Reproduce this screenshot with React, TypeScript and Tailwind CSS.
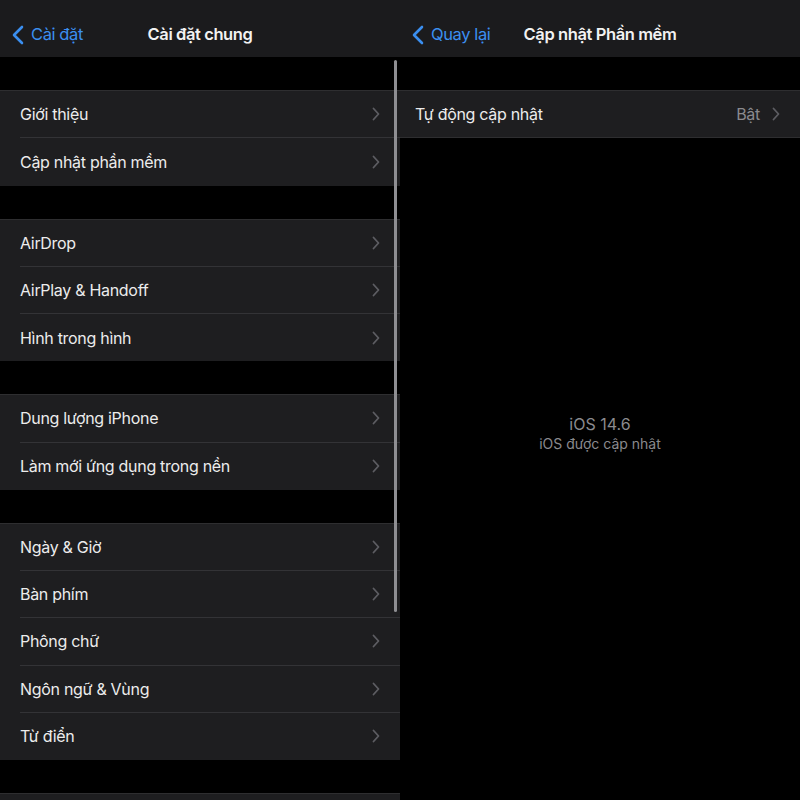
import React from 'react';

const groups: string[][] = [
  ['Giới thiệu', 'Cập nhật phần mềm'],
  ['AirDrop', 'AirPlay & Handoff', 'Hình trong hình'],
  ['Dung lượng iPhone', 'Làm mới ứng dụng trong nền'],
  ['Ngày & Giờ', 'Bàn phím', 'Phông chữ', 'Ngôn ngữ & Vùng', 'Từ điển'],
];

const Chevron = () => (
  <svg width="8" height="14" viewBox="0 0 8 14" fill="none">
    <path d="M1.5 1.5L6.5 7L1.5 12.5" stroke="#5d5d62" strokeWidth="1.8" strokeLinecap="round" strokeLinejoin="round" />
  </svg>
);

const BackChevron = () => (
  <svg width="12" height="20" viewBox="0 0 12 20" fill="none">
    <path d="M10 2L2 10L10 18" stroke="#3b8ff0" strokeWidth="2.6" strokeLinecap="round" strokeLinejoin="round" />
  </svg>
);

const NavBar = ({ back, title }: { back: string; title: string }) => (
  <div className="relative flex h-[57px] shrink-0 items-center bg-[#1b1b1d]">
    <div className="flex items-center gap-[7px] pl-[12px] pt-[12px]">
      <BackChevron />
      <span className="text-[16.5px] tracking-[-0.4px] text-[#3b8ff0]">{back}</span>
    </div>
    <div className="pointer-events-none absolute inset-x-0 top-0 flex h-full items-center justify-center pt-[12px]">
      <span className="text-[16.5px] font-semibold tracking-[-0.4px] text-[#f2f2f2]">{title}</span>
    </div>
  </div>
);

const Row = ({ label, last }: { label: string; last?: boolean }) => (
  <div className="flex h-[47.25px] items-stretch pl-[20px]">
    <div className={`flex flex-1 items-center pr-[20px] ${last ? '' : 'border-b border-[#333336]'}`}>
      <span className="flex-1 text-[16px] tracking-[-0.3px] text-[#ececec]">{label}</span>
      <Chevron />
    </div>
  </div>
);

const Group = ({ items }: { items: string[] }) => (
  <div className="border-t border-[#2e2e30] bg-[#1e1e20]">
    {items.map((it, i) => (
      <Row key={it} label={it} last={i === items.length - 1} />
    ))}
  </div>
);

export default function App() {
  return (
    <div className="flex h-[800px] w-[800px] overflow-hidden bg-black" style={{ fontFamily: 'Inter, "Noto Sans", sans-serif' }}>
      <div className="relative flex w-[400px] flex-col">
        <NavBar back="Cài đặt" title="Cài đặt chung" />
        <div className="flex flex-col gap-[33px] pt-[33px]">
          {groups.map((g, i) => (
            <Group key={i} items={g} />
          ))}
          {/* next group, scrolled mostly out of view */}
          <div className="h-[47px] border-t border-[#2e2e30] bg-[#1e1e20]" />
        </div>
        <div className="absolute right-[3px] top-[60px] h-[552px] w-[3px] rounded-full bg-[#8e8e92]" />
      </div>
      <div className="flex w-[400px] flex-col">
        <NavBar back="Quay lại" title="Cập nhật Phần mềm" />
        <div className="pt-[33px]">
          <div className="border-t border-b border-[#2e2e30] bg-[#1e1e20]">
            <div className="flex h-[46px] items-center pl-[15px] pr-[20px]">
              <span className="flex-1 text-[16px] tracking-[-0.3px] text-[#ececec]">Tự động cập nhật</span>
              <span className="mr-[12px] text-[16px] tracking-[-0.3px] text-[#8a8a8e]">Bật</span>
              <Chevron />
            </div>
          </div>
        </div>
        <div className="flex flex-col items-center pt-[276px]">
          <span className="text-[16px] leading-[20px] text-[#8a8a8e]">iOS 14.6</span>
          <span className="text-[14px] leading-[20px] text-[#8a8a8e]">iOS được cập nhật</span>
        </div>
      </div>
    </div>
  );
}
